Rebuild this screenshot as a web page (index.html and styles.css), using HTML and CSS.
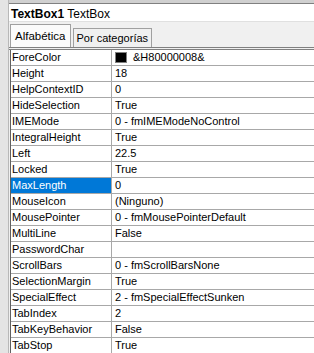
FILE: index.html
```html
<!DOCTYPE html>
<html>
<head>
<meta name="viewport" content="width=device-width, initial-scale=1.0">
<link rel="stylesheet" href="styles.css">
</head>
<body>
  <div class="frame">
    <div class="gutter"></div>
    <div class="panel">
      <div class="title"><b>TextBox1</b> TextBox</div>
      <div class="tabs">
        <div class="tab active">Alfabética</div>
        <div class="tab">Por categorías</div>
      </div>
      <div class="grid">
        <div class="row"><div class="name">ForeColor</div><div class="value"><span class="swatch"></span>&amp;H80000008&amp;</div></div>
        <div class="row"><div class="name">Height</div><div class="value">18</div></div>
        <div class="row"><div class="name">HelpContextID</div><div class="value">0</div></div>
        <div class="row"><div class="name">HideSelection</div><div class="value">True</div></div>
        <div class="row"><div class="name">IMEMode</div><div class="value">0 - fmIMEModeNoControl</div></div>
        <div class="row"><div class="name">IntegralHeight</div><div class="value">True</div></div>
        <div class="row"><div class="name">Left</div><div class="value">22.5</div></div>
        <div class="row"><div class="name">Locked</div><div class="value">True</div></div>
        <div class="row selected"><div class="name">MaxLength</div><div class="value">0</div></div>
        <div class="row"><div class="name">MouseIcon</div><div class="value">(Ninguno)</div></div>
        <div class="row"><div class="name">MousePointer</div><div class="value">0 - fmMousePointerDefault</div></div>
        <div class="row"><div class="name">MultiLine</div><div class="value">False</div></div>
        <div class="row"><div class="name">PasswordChar</div><div class="value"></div></div>
        <div class="row"><div class="name">ScrollBars</div><div class="value">0 - fmScrollBarsNone</div></div>
        <div class="row"><div class="name">SelectionMargin</div><div class="value">True</div></div>
        <div class="row"><div class="name">SpecialEffect</div><div class="value">2 - fmSpecialEffectSunken</div></div>
        <div class="row"><div class="name">TabIndex</div><div class="value">2</div></div>
        <div class="row"><div class="name">TabKeyBehavior</div><div class="value">False</div></div>
        <div class="row"><div class="name">TabStop</div><div class="value">True</div></div>
      </div>
    </div>
  </div>
</body>
</html>
```

FILE: styles.css
```css
* {box-sizing: border-box;}

body {
  margin: 0;
  background: #f0f0f0;
  font-family: "Liberation Sans", Arial, sans-serif;
  font-size: 11px;
  color: #000;
}

.frame {
  display: flex;
  height: 353px;
  overflow: hidden;
}

.gutter {
  width: 9px;
  flex: none;
  background: #e4e4e4;
  border-right: 1px solid #b8b8b8;
}

.panel {
  flex: 1;
  border-top: 3px solid #d0d0d0;
  box-shadow: inset 0 1px 0 #808080;
}

.title {
  background: #fff;
  height: 18px;
  margin-top: 1px;
  padding: 3px 0 0 2px;
  font-size: 12px;
  border-bottom: 1px solid #e0e0e0;
}

.tabs {
  display: flex;
  align-items: flex-end;
  height: 28px;
  padding-left: 1px;
  border-bottom: 3px double #808080;
}

.tab {
  height: 19px;
  padding: 3px 3px 0 3px;
  font-size: 11px;
  border: 1px solid #a0a0a0;
  border-bottom: none;
  margin-left: 2px;
}

.tab.active {
  height: 23px;
  padding: 5px 4px 0 4px;
  font-size: 11.5px;
  background: #fbfbfb;
  margin-left: 0;
}

.grid {
  background: #fff;
  border-left: 1px solid #606060;
  margin-left: 1px;
}

.row {
  display: flex;
  height: 16px;
  border-bottom: 1px solid #a8a8a8;
}

.name {
  width: 101px;
  flex: none;
  padding: 1px 0 0 1px;
  border-right: 1px solid #a8a8a8;
}

.value {
  flex: 1;
  padding: 1px 0 0 3px;
  display: flex;
  align-items: flex-start;
  margin-right: 4px;
}

.selected .name {
  background: #0078d7;
  color: #fff;
}

.swatch {
  display: inline-block;
  width: 12px;
  height: 11px;
  background: #000;
  border: 1px solid #808080;
  margin: 1px 6px 0 0;
}
```
